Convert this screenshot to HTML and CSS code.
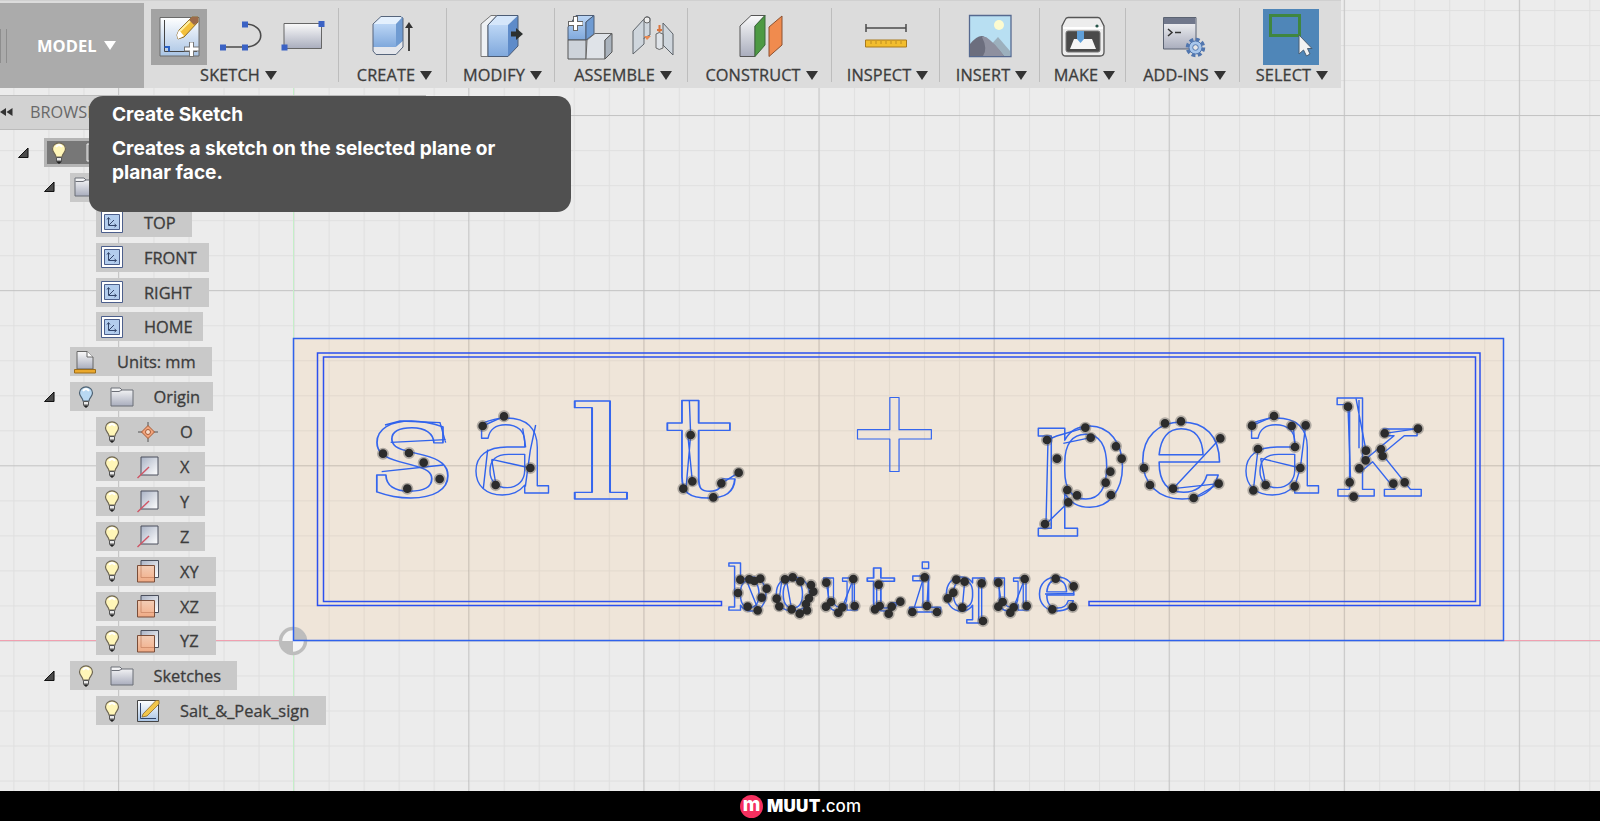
FILE: index.html
```html
<!DOCTYPE html>
<html lang="en">
<head>
<meta charset="utf-8">
<title>Salt &amp; Peak sign</title>
<link rel="stylesheet" href="styles.css">
</head>
<body>
<div class="app">
  <svg class="canvas" viewBox="0 0 1600 791" width="1600" height="791">
    <defs>
      <pattern id="minor" x="13.4" y="10.1" width="35.02" height="35.02" patternUnits="userSpaceOnUse"><path d="M0 .5H36M.5 0V36" class="g-minor"/></pattern>
      <pattern id="major" x="118" y="115" width="175.1" height="175.15" patternUnits="userSpaceOnUse"><path d="M0 .5H176M.5 0V176" class="g-major"/></pattern>
    </defs>
    <path class="plate" d="M293.5 338.5H1503.5V640.5H293.5Z"/>
    <rect width="1600" height="791" fill="url(#minor)"/>
    <rect width="1600" height="791" fill="url(#major)"/>
    <path d="M0 640.5H1600" stroke="#f0a0b0"/>
    <path d="M293.5 0V791" stroke="#c4efc8"/>
    <circle cx="293" cy="641" r="12.5" fill="#f4f4f4" stroke="#bdbdbd" stroke-width="3.5"/>
    <path d="M293 641V628.500A12.500 12.500 0 0 1 305.500 641ZM293 641H280.500A12.500 12.500 0 0 0 293 653.500Z" fill="#bdbdbd"/>
    <path class="ink" d="M293.500 338.500H1503.500V640.500H293.500Z" stroke-width="1.500"/>
    <path class="ink thin" d="M721.500 605.500H317.500V353H1480V605.500H1089V601.500H1475.500V357H323.500V601.500H721.500Z"/>

    <g class="letters">
      <text transform="translate(367 496) scale(1.75 1.4)">s</text>
      <text transform="translate(469 493) scale(1.4 1.4)">a</text>
      <text transform="translate(569 499) scale(2 1.3)">l</text>
      <text transform="translate(662 496) scale(1.85 1.4)">t</text>
      <text transform="translate(845 471) scale(1.18)">+</text>
      <text transform="translate(1034 505) scale(1.5 1.47)">p</text>
      <text transform="translate(1135 497) scale(1.56 1.4)">e</text>
      <text transform="translate(1239 493) scale(1.4 1.4)">a</text>
      <text transform="translate(1333 496) scale(1.44 1.3)">k</text>
    </g>
    <g class="letters small">
      <text transform="translate(727 610) scale(.66 .61)">b</text>
      <text transform="translate(773 610) scale(.66 .61)">o</text>
      <text transform="translate(822 610) scale(.58 .61)">u</text>
      <text transform="translate(865 610) scale(.8 .61)">t</text>
      <text class="mono" transform="translate(905 612) scale(.65 .69)">i</text>
      <text transform="translate(943 610) scale(.68 .61)">q</text>
      <text transform="translate(993 610) scale(.58 .61)">u</text>
      <text transform="translate(1036 610) scale(.7 .61)">e</text>
    </g>

    <g transform="translate(360 380) scale(.33333)">
      <path class="ink chord" d="M92 187L257 179M65 275L250 255M75 135L120 123L240 128L257 188M383 209L370 325M395 238L408 315M395 238L511 264M527 135L511 210L496 320M488 145L497 202M368 138L432 109M988 60L992 165L978 326M984 170L997 304M1084 310L1136 278"/>
      <path class="halo" d="M69 221h0M147 219h0M191 248h0M239 297h0M142 326h0M368 138h0M432 109h0M511 264h0M407 315h0M992 165h0M970 326h0M997 304h0M1060 352h0M1084 310h0M1136 278h0"/>
      <path class="dot" d="M69 221h0M147 219h0M191 248h0M239 297h0M142 326h0M368 138h0M432 109h0M511 264h0M407 315h0M992 165h0M970 326h0M997 304h0M1060 352h0M1084 310h0M1136 278h0"/>
    </g>
    <g transform="translate(1020 380) scale(.33333)">
      <path class="ink chord" d="M84 180L78 432L145 367M81 180L110 168L196 143M130 190L212 173M459 326L601 175M459 326L596 311L521 354M714 207L700 331M722 235L737 315M722 235L841 264M857 136L841 264L824 319M696 137L762 108M820 138L825 201M984 80L992 307M1008 55L1038 212M1017 60V205M1094 160L1194 146"/>
      <path class="halo" d="M81 180h0M196 143h0M212 173h0M288 199h0M305 236h0M111 236h0M271 275h0M257 308h0M142 330h0M171 346h0M145 367h0M273 345h0M75 432h0M435 130h0M483 124h0M601 175h0M372 264h0M390 315h0M459 326h0M521 354h0M596 311h0M696 137h0M762 108h0M815 138h0M857 136h0M714 207h0M825 201h0M841 264h0M737 315h0M700 331h0M824 319h0M984 80h0M1094 160h0M1194 146h0M1038 212h0M1083 208h0M1088 228h0M1037 241h0M1018 265h0M989 307h0M1001 350h0M1120 311h0M1154 307h0"/>
      <path class="dot" d="M81 180h0M196 143h0M212 173h0M288 199h0M305 236h0M111 236h0M271 275h0M257 308h0M142 330h0M171 346h0M145 367h0M273 345h0M75 432h0M435 130h0M483 124h0M601 175h0M372 264h0M390 315h0M459 326h0M521 354h0M596 311h0M696 137h0M762 108h0M815 138h0M857 136h0M714 207h0M825 201h0M841 264h0M737 315h0M700 331h0M824 319h0M984 80h0M1094 160h0M1194 146h0M1038 212h0M1083 208h0M1088 228h0M1037 241h0M1018 265h0M989 307h0M1001 350h0M1120 311h0M1154 307h0"/>
    </g>
    <g transform="translate(700 540) scale(.33333)">
      <path class="ink chord" d="M143 130L173 205M260 125L275 208M245 125L235 195M379 128L390 195M460 117L427 202M463 120V195M530 134V205M670 115L640 212M685 120L681 198M794 125L787 203M845 130V243M895 128L905 195M974 117L941 202M978 120V195M1035 162L1121 160"/>
      <path class="halo" d="M121 119h0M163 123h0M148 118h0M181 116h0M200 146h0M185 173h0M114 159h0M143 200h0M173 211h0M255 118h0M278 112h0M301 124h0M333 135h0M340 155h0M327 175h0M318 192h0M230 176h0M238 199h0M275 208h0M299 221h0M321 211h0M379 128h0M393 186h0M378 200h0M415 218h0M427 202h0M464 198h0M460 117h0M536 134h0M525 208h0M539 198h0M566 221h0M575 200h0M601 185h0M674 112h0M637 216h0M681 198h0M711 216h0M769 119h0M794 125h0M845 130h0M760 158h0M743 175h0M787 203h0M849 243h0M895 128h0M908 186h0M895 200h0M931 218h0M941 202h0M980 198h0M974 117h0M1067 116h0M1121 139h0M1057 208h0M1118 201h0"/>
      <path class="dot" d="M121 119h0M163 123h0M148 118h0M181 116h0M200 146h0M185 173h0M114 159h0M143 200h0M173 211h0M255 118h0M278 112h0M301 124h0M333 135h0M340 155h0M327 175h0M318 192h0M230 176h0M238 199h0M275 208h0M299 221h0M321 211h0M379 128h0M393 186h0M378 200h0M415 218h0M427 202h0M464 198h0M460 117h0M536 134h0M525 208h0M539 198h0M566 221h0M575 200h0M601 185h0M674 112h0M637 216h0M681 198h0M711 216h0M769 119h0M794 125h0M845 130h0M760 158h0M743 175h0M787 203h0M849 243h0M895 128h0M908 186h0M895 200h0M931 218h0M941 202h0M980 198h0M974 117h0M1067 116h0M1121 139h0M1057 208h0M1118 201h0"/>
    </g>
  </svg>

  <svg class="defs" width="0" height="0">
    <defs>
      <linearGradient id="steel" x2="0" y2="1"><stop stop-color="#fafafa"/><stop offset="1" stop-color="#a9adbd"/></linearGradient>
      <linearGradient id="pale" x2="1" y2="1"><stop stop-color="#a9b2c4"/><stop offset="1" stop-color="#fff"/></linearGradient>
      <linearGradient id="blue" x2="0" y2="1"><stop stop-color="#bcd6f5"/><stop offset="1" stop-color="#7fa8dc"/></linearGradient>
      <linearGradient id="pageblue" x2="0" y2="1"><stop stop-color="#fff"/><stop offset="1" stop-color="#a9c4e4"/></linearGradient>
      <linearGradient id="peach" x2="0" y2="1"><stop stop-color="#f7cdb2"/><stop offset="1" stop-color="#f3a67c"/></linearGradient>
      <symbol id="bulb" viewBox="0 0 16 22"><path d="M5 15C5 12 1.500 10.500 1.500 7a6.500 6.200 0 0 1 13 0C14.500 10.500 11 12 11 15Z" fill="#fff6b8" stroke="#6d6554" stroke-width="1.200"/><path d="M5 5Q8 1 11 5" stroke="#fff" stroke-width="2" fill="none"/><path d="M5.500 15.500H10.500V19H5.500Z" fill="#e8e8e8" stroke="#555"/><path d="M5 19.500H11L8 22Z" fill="#222"/></symbol>
      <symbol id="bulb-off" viewBox="0 0 16 22"><path d="M5 15C5 12 1.500 10.500 1.500 7a6.500 6.200 0 0 1 13 0C14.500 10.500 11 12 11 15Z" fill="#b9d9f2" stroke="#4f6272" stroke-width="1.200"/><path d="M5 5Q8 1 11 5" stroke="#fff" stroke-width="2" fill="none"/><path d="M5.500 15.500H10.500V19H5.500Z" fill="#e8e8e8" stroke="#555"/><path d="M5 19.500H11L8 22Z" fill="#222"/></symbol>
      <symbol id="view" viewBox="0 0 24 24"><path d="M1.500 1.500H22.500V22.500H1.500Z" fill="#fff" stroke="#4c5f8c"/><path d="M4.500 4.500H19.500V19.500H4.500Z" fill="#b3cdee" stroke="#4c5f8c"/><path d="M8.500 8V15.500H16M9 15L14 10M7 9.500L8.500 7.500L10 9.500M14.500 14L16.500 15.500L14.500 17" fill="none" stroke="#33456b"/></symbol>
      <symbol id="folder" viewBox="0 0 24 20"><path d="M1 19V1H10L12 3H23V19Z" fill="url(#steel)" stroke="#6b6e76"/><path d="M1.500 4.500H9L12 3" fill="none" stroke="#6b6e76"/></symbol>
      <symbol id="axis" viewBox="0 0 24 24"><path d="M5 2H22V20H5Z" fill="url(#pale)" stroke="#4a4f5c"/><path d="M1.500 23L13 12" stroke="#cf5565" stroke-width="1.400"/></symbol>
      <symbol id="plane" viewBox="0 0 24 24"><path d="M5 1.500H22.500V18.500H5Z" fill="url(#pale)" stroke="#4a4f5c"/><path d="M1.500 6.500H18.500V23H1.500Z" fill="url(#peach)" fill-opacity=".9" stroke="#7a4d38"/><path d="M5 7V18.500H18" fill="none" stroke="#c98260" stroke-opacity=".6"/></symbol>
      <symbol id="tri" viewBox="0 0 12 11"><path d="M11 0V10.500H.5Z" fill="#4a4a4a" stroke="#000" stroke-width="1"/></symbol>
    </defs>
  </svg>

  <header class="toolbar">
    <div class="workspace"><i class="grip"></i><span>MODEL</span><i class="caret light"></i></div>
    <div class="group g1">
      <div class="icons">
        <svg class="pressed" width="56" height="56"><path d="M9 8.500H48V47H9Z" fill="url(#pageblue)" stroke="#6a6a6a"/><path d="M13.500 11V42.500H46" fill="none" stroke="#444"/><path d="M13.500 38H18V42.500" fill="none" stroke="#2a61c4" stroke-width="2"/><path d="M26 26L28 21L41 8H47V13L33 28L27 30Z" fill="#f3c03b" stroke="#8d6a28"/><path d="M29 22L42 9" stroke="#fff0a0" stroke-width="2"/><path d="M41 8H47V13L43 16L38 11Z" fill="#9c6a4a"/><path d="M26 26L28 21L33 27L27 30Z" fill="#fff"/><path d="M33 40H48M40.500 33V48" stroke="#777" stroke-width="5"/><path d="M34 40H47.500M40.500 33.500V47" stroke="#fff" stroke-width="3"/></svg>
        <svg width="56" height="56"><path d="M10 38H32C53 38 53 15 32 15" fill="none" stroke="#4b4b4b" stroke-width="1.600"/><path d="M7 35.500h6v6h-6ZM29 35.500h6v6h-6ZM29 12.500h6v6h-6Z" fill="#3b62c4"/></svg>
        <svg width="56" height="56"><path d="M9 14.500H46.500V39.500H9Z" fill="url(#steel)" stroke="#666"/><path d="M43.500 12h6v6h-6ZM6.500 35.500h6v6h-6Z" fill="#3b62c4"/></svg>
      </div>
      <div class="label">SKETCH<i class="caret"></i></div>
    </div>
    <div class="group g2">
      <div class="icons"><svg width="56" height="56"><path d="M8 15L16 7.500H38L31 15Z" fill="#e4f0fd"/><path d="M8 15H31V38H8Z" fill="url(#blue)"/><path d="M31 15L38 7.500V32L31 38Z" fill="#6f9bd2"/><path d="M8 38H31V45.500H11L8 42ZM31 38L38 32V38L31 45.500Z" fill="#e6e9ee" opacity=".85"/><path d="M8 42V15L16 7.500H36L38 9.500V38L31 45.500H11Z" fill="none" stroke="#56657c"/><path d="M44 42V16" stroke="#444" stroke-width="2"/><path d="M40 19L44 13L48 19Z" fill="#333"/></svg></div>
      <div class="label">CREATE<i class="caret"></i></div>
    </div>
    <div class="group g3">
      <div class="icons"><svg width="56" height="56"><path d="M8 15L18 6.500H24L15 16V47.500H8Z" fill="#eef1f4" stroke="#777"/><path d="M15 16L24 6.500H45L35 16Z" fill="#d5e6fa"/><path d="M15 16H35V47.500H15Z" fill="url(#blue)"/><path d="M35 16L45 6.500V37L35 47.500Z" fill="#5e8bc9"/><path d="M15 16L24 6.500H45V37L35 47.500H15Z" fill="none" stroke="#4c5c75"/><path d="M38 22.500H43V19L50 25L43 31V27.500H38Z" fill="#2d3130"/></svg></div>
      <div class="label">MODIFY<i class="caret"></i></div>
    </div>
    <div class="group g4">
      <div class="icons">
        <svg width="60" height="56"><path d="M8 18L16 6.500H34L26 13V31H8Z" fill="url(#blue)" stroke="#4c5c75"/><path d="M26 13L34 6.500V25L26 31Z" fill="#6f9bd2" stroke="#4c5c75"/><path d="M8 31H26V50H8Z" fill="#cdd3da" stroke="#555"/><path d="M27 31L35 24.500H52L45 31V50H26Z" fill="#dfe3e8" stroke="#666"/><path d="M45 31L52 24.500V43L45 50Z" fill="#aab3bd" stroke="#555"/><path d="M8 14.500H23M15.500 7V22" stroke="#666" stroke-width="5"/><path d="M9 14.500H22.500M15.500 8V21" stroke="#fff" stroke-width="3"/></svg>
        <svg width="60" height="56"><path d="M9 22L20 10Q22 6 26 9V26L20 29V35L9 45Z" fill="#cfd6dd" stroke="#5c6268"/><path d="M20 10V30" stroke="#6c7278"/><circle cx="23" cy="11" r="3" fill="#eee" stroke="#666"/><path d="M20 27H27L23 31Z" fill="#e88953"/><path d="M39 14L49 25V46L39 36Z" fill="#cfd6dd" stroke="#5c6268"/><path d="M32 25Q35 22 39 25V39Q35 42 32 39Z" fill="#dfe3e8" stroke="#666"/><path d="M35.500 16V23M33 21H38" stroke="#d8743e" stroke-width="2"/></svg>
      </div>
      <div class="label">ASSEMBLE<i class="caret"></i></div>
    </div>
    <div class="group g5">
      <div class="icons"><svg width="56" height="56"><path d="M8 17L19 6.500H33L23 17V47.500H8Z" fill="url(#steel)" stroke="#555"/><path d="M23 17L33 6.500V36L23 47.500Z" fill="#4d9a43" stroke="#3c6b3c"/><path d="M37 18L50 7V36L37 47.500Z" fill="#f08b4e" stroke="#8c5130"/></svg></div>
      <div class="label">CONSTRUCT<i class="caret"></i></div>
    </div>
    <div class="group g6">
      <div class="icons"><svg width="56" height="56"><path d="M8 19H48M8 15V23M48 15V23" stroke="#4b4b4b" stroke-width="1.500"/><path d="M7.500 31H48.500V38H7.500Z" fill="#f2bd2d" stroke="#a87a1e"/><path d="M13 32v3M18 32v3M23 32v3M28 32v3M33 32v3M38 32v3M43 32v3" stroke="#a87a1e" stroke-opacity=".7"/></svg></div>
      <div class="label">INSPECT<i class="caret"></i></div>
    </div>
    <div class="group g7">
      <div class="icons"><svg width="56" height="56"><path d="M7.500 6.500H49V47.500H7.500Z" fill="#b8dff2" stroke="#56698f" stroke-width="1.300"/><circle cx="37" cy="16" r="5" fill="#fcfbd0"/><path d="M25 40L36 28L48 42V47H26Z" fill="#9cb0bd"/><path d="M8 35Q17 24 23 28Q33 35 42 47H8Z" fill="#6c6e7e"/><path d="M20 28Q26 40 21 47H42Q33 34 24 28Z" fill="#8e909f"/></svg></div>
      <div class="label">INSERT<i class="caret"></i></div>
    </div>
    <div class="group g8">
      <div class="icons"><svg width="56" height="56"><path d="M13 8.500H43Q45 8.500 46 11L49 17V43Q49 47 45 47H11Q7 47 7 43V17L10 11Q11 8.500 13 8.500Z" fill="#ededed" stroke="#555" stroke-width="1.300"/><path d="M8 19H48" stroke="#fff" stroke-width="2"/><rect x="11" y="22" width="34" height="21" rx="2" fill="#4a4a4a" stroke="#777"/><path d="M19 30H37L41 40H15Z" fill="#f6f6f6"/><path d="M22 22H29V30L25.500 34L22 30Z" fill="#5f9fd8"/><circle cx="42" cy="17" r="1.600" fill="#27564a"/></svg></div>
      <div class="label">MAKE<i class="caret"></i></div>
    </div>
    <div class="group g9">
      <div class="icons"><svg width="56" height="56"><path d="M8.500 8.500H41V40H8.500Z" fill="url(#steel)" stroke="#5b6372"/><path d="M9 9H40.500V15H9Z" fill="#70778b"/><path d="M13 20L17 23.500L13 27M20 23.500H26" fill="none" stroke="#333" stroke-width="1.500"/><circle cx="40.500" cy="38.500" r="7.500" fill="none" stroke="#5176ae" stroke-width="4.500" stroke-dasharray="3.600 2.290"/><circle cx="40.500" cy="38.500" r="6.500" fill="#a7c6eb" stroke="#5176ae"/><circle cx="40.500" cy="38.500" r="2.800" fill="#e6e6e6" stroke="#5176ae"/></svg></div>
      <div class="label">ADD-INS<i class="caret"></i></div>
    </div>
    <div class="group g10">
      <div class="icons"><svg class="selected" width="56" height="56"><path d="M7.500 6.500H36.500V26.500H7.500Z" fill="none" stroke="#3f8640" stroke-width="3"/><path d="M36 26V45L40.500 41L43.500 47L47 45L44.500 39.500H49Z" fill="#f2f2f2" stroke="#4a5f75"/></svg></div>
      <div class="label">SELECT<i class="caret"></i></div>
    </div>
  </header>

  <section class="browser">
    <div class="browser-head"><svg width="13" height="8"><path d="M6 0V8L0 4ZM12.500 0V8L6.500 4Z" fill="#333"/></svg><span>BROWSER</span></div>
    <ul class="tree">
      <li class="l0"><svg class="tw"><use href="#tri"/></svg><div class="pill root"><svg class="bulb"><use href="#bulb"/></svg><svg class="ic"><path d="M1 3H22V20H1Z" fill="#999" stroke="#eee"/></svg></div></li>
      <li class="l1"><svg class="tw"><use href="#tri"/></svg><div class="pill w-views"><svg class="folder"><use href="#folder"/></svg></div></li>
      <li class="l2"><div class="pill view w-top"><svg class="ic"><use href="#view"/></svg><span>TOP</span></div></li>
      <li class="l2"><div class="pill view w-front"><svg class="ic"><use href="#view"/></svg><span>FRONT</span></div></li>
      <li class="l2"><div class="pill view w-front"><svg class="ic"><use href="#view"/></svg><span>RIGHT</span></div></li>
      <li class="l2"><div class="pill view w-home"><svg class="ic"><use href="#view"/></svg><span>HOME</span></div></li>
      <li class="l1"><i class="tw"></i><div class="pill units w-units"><svg class="ic" viewBox="0 0 24 24"><path d="M4 19V1.500H14L20 7V19Z" fill="url(#steel)" stroke="#666"/><path d="M14 1.500V7H20" fill="#fff" stroke="#666"/><path d="M1.500 19.500H22.500V23H1.500Z" fill="#eaa82c" stroke="#9c6c18"/></svg><span>Units: mm</span></div></li>
      <li class="l1"><svg class="tw"><use href="#tri"/></svg><div class="pill w-origin"><svg class="bulb"><use href="#bulb-off"/></svg><svg class="folder"><use href="#folder"/></svg><span>Origin</span></div></li>
      <li class="l2"><div class="pill w-axis"><svg class="bulb"><use href="#bulb"/></svg><svg class="ic" viewBox="0 0 24 24"><path d="M12 2V22M2 12H22" stroke="#555"/><path d="M12 5.500L18.500 12L12 18.500L5.500 12Z" fill="#f2a47c" stroke="#a75b36"/><circle cx="12" cy="12" r="2.500" fill="#f8dccb" stroke="#a75b36"/></svg><span>O</span></div></li>
      <li class="l2"><div class="pill w-axis"><svg class="bulb"><use href="#bulb"/></svg><svg class="ic"><use href="#axis"/></svg><span>X</span></div></li>
      <li class="l2"><div class="pill w-axis"><svg class="bulb"><use href="#bulb"/></svg><svg class="ic"><use href="#axis"/></svg><span>Y</span></div></li>
      <li class="l2"><div class="pill w-axis"><svg class="bulb"><use href="#bulb"/></svg><svg class="ic"><use href="#axis"/></svg><span>Z</span></div></li>
      <li class="l2"><div class="pill w-plane"><svg class="bulb"><use href="#bulb"/></svg><svg class="ic"><use href="#plane"/></svg><span>XY</span></div></li>
      <li class="l2"><div class="pill w-plane"><svg class="bulb"><use href="#bulb"/></svg><svg class="ic"><use href="#plane"/></svg><span>XZ</span></div></li>
      <li class="l2"><div class="pill w-plane"><svg class="bulb"><use href="#bulb"/></svg><svg class="ic"><use href="#plane"/></svg><span>YZ</span></div></li>
      <li class="l1"><svg class="tw"><use href="#tri"/></svg><div class="pill w-sketches"><svg class="bulb"><use href="#bulb"/></svg><svg class="folder"><use href="#folder"/></svg><span>Sketches</span></div></li>
      <li class="l2"><div class="pill w-sign"><svg class="bulb"><use href="#bulb"/></svg><svg class="ic" viewBox="0 0 24 24"><path d="M1.500 1.500H22.500V22.500H1.500Z" fill="url(#pageblue)" stroke="#444"/><path d="M4.500 4V19.500H20" fill="none" stroke="#31456b"/><path d="M7 15L20 1.500H23V5L11 17L6 18Z" fill="#f2c64a" stroke="#8d6a28" stroke-width=".8"/></svg><span>Salt_&amp;_Peak_sign</span></div></li>
    </ul>
  </section>

  <div class="tooltip" role="tooltip"><p>Create Sketch</p><p>Creates a sketch on the selected plane or<br>planar face.</p></div>
</div>
<footer class="footer"><span class="badge">m</span><b>MUUT</b><span>.com</span></footer>
</body>
</html>
```
FILE: styles.css
```css
* { box-sizing: border-box; }
body { margin: 0; width: 1600px; height: 821px; overflow: hidden; background: #000; font-family: "Open Sans", "Noto Sans", sans-serif; color: #3c3c3c; }
.app { position: relative; height: 791px; overflow: hidden; background: #ececec; }
.canvas { position: absolute; left: 0; top: 0; }
.defs { position: absolute; }
.g-minor { stroke: #000; stroke-opacity: .055; fill: none; }
.g-major { stroke: #000; stroke-opacity: .13; fill: none; }
.plate { fill: #efe5d9; }
.ink { fill: none; stroke: #2f62ec; stroke-width: 1.5; }
.ink.thin { stroke: #2c50ee; }
.ink.chord { stroke-width: 4.2; }
.letters text { font: 100px "DejaVu Serif", serif; fill: none; stroke: #3566ee; stroke-width: 1; stroke-linejoin: round; }
.letters .mono { font-family: "Liberation Mono", monospace; }
.letters.small text { stroke-width: 2.2; }
.dot { stroke: #2c2c2c; stroke-width: 26; stroke-linecap: round; }
.halo { stroke: #555; stroke-opacity: .4; stroke-width: 36; stroke-linecap: round; }

.toolbar { position: relative; display: flex; width: 1341px; height: 88px; padding-top: 2px; background: #dcdcdc; border-top: 1px solid #d0d0d0; }
.workspace { display: flex; align-items: center; width: 144px; background: #ababab; color: #fff; font-size: 16.5px; font-weight: 700; }
.workspace .grip { width: 7px; height: 34px; border: solid #8e8e8e; border-width: 0 1px; margin-right: 30px; }
.workspace .caret { margin-left: 8px; }
.group { display: flex; flex-direction: column; align-items: center; padding-top: 6px; background: linear-gradient(#bdbdbd, #bdbdbd) right 5px / 1px 74px no-repeat; }
.g1 { width: 195px; } .g2 { width: 108px; } .g3 { width: 108px; } .g4 { width: 133px; } .g5 { width: 144px; }
.g6 { width: 108px; } .g7 { width: 100px; } .g8 { width: 86px; } .g9 { width: 114px; } .g10 { width: 101px; background: none; }
.icons { display: flex; height: 56px; }
.g1 .icons { gap: 6px; padding-right: 2px; }
.g4 .icons { gap: 4px; }
.icons svg { display: block; }
.pressed { background: #a3a3a3; }
.selected { background: #4f86b8; }
.label { display: flex; align-items: center; height: 20px; padding-left: 3px; font-size: 16.3px; white-space: nowrap; letter-spacing: .1px; -webkit-text-stroke: .3px #3c3c3c; }
.g1 .label { padding: 0 6px 0 0; }
.caret { display: block; margin-left: 5px; border: 6.5px solid transparent; border-top: 9px solid #333; border-bottom: 0; }
.caret.light { border-top-color: #fff; }

.browser { position: relative; width: 426px; padding-top: 7px; }
.browser-head { display: flex; align-items: center; height: 35px; padding-bottom: 2px; background: #d2d2d2; border-top: 1px solid #bbb; border-bottom: 1px solid #bbb; color: #686868; font-size: 16.3px; }
.browser-head svg { width: 13px; margin-right: 17px; }
.tree { list-style: none; margin: 0; padding: 8px 0 0; display: flex; flex-direction: column; gap: 5.9px; }
.tree li { display: flex; align-items: center; height: 29px; }
.l0 { padding-left: 17.5px; } .l1 { padding-left: 43.5px; } .l2 { padding-left: 96px; }
.tw { width: 11px; height: 10px; margin-right: 15.5px; }
.pill { display: flex; align-items: center; height: 29px; background: #c9c9c9; font-size: 16.4px; -webkit-text-stroke: .3px #3c3c3c; padding-left: 8px; white-space: nowrap; }
.bulb { width: 16px; height: 22px; margin-right: 16px; flex: none; }
.ic { width: 24px; height: 24px; margin-right: 20px; flex: none; }
.folder { width: 24px; height: 20px; margin-right: 19.5px; flex: none; }
.view { padding-left: 4px; }
.units { padding-left: 3px; }
.root { width: 200px; background: #777; border: 3px solid #b5b5b5; padding-left: 4px; }
.root .bulb { margin-right: 19px; }
.w-views { width: 130px; padding-left: 4px; }
.w-top { width: 96px; } .w-front { width: 113px; } .w-home { width: 107px; } .w-units { width: 142px; } .w-origin { width: 143px; }
.w-axis { width: 109px; } .w-plane { width: 120px; } .w-sketches { width: 167px; } .w-sign { width: 230px; }

.tooltip { position: absolute; left: 89px; top: 96px; width: 482px; height: 116px; padding: 7px 23px; border-radius: 14px; background: #505050; color: #fff; font: 700 19.1px/23.5px Inter, sans-serif; white-space: nowrap; }
.tooltip p { margin: 0 0 10.5px; }

.footer { display: flex; align-items: center; justify-content: center; height: 30px; color: #fff; font: 500 17px Inter, sans-serif; padding-left: 1px; }
.badge { width: 23px; height: 23px; margin-right: 4px; border-radius: 50%; background: #f5305f; text-align: center; font: 800 19px/19px Inter, sans-serif; }
.footer b { font-weight: 900; letter-spacing: .3px; }
```
